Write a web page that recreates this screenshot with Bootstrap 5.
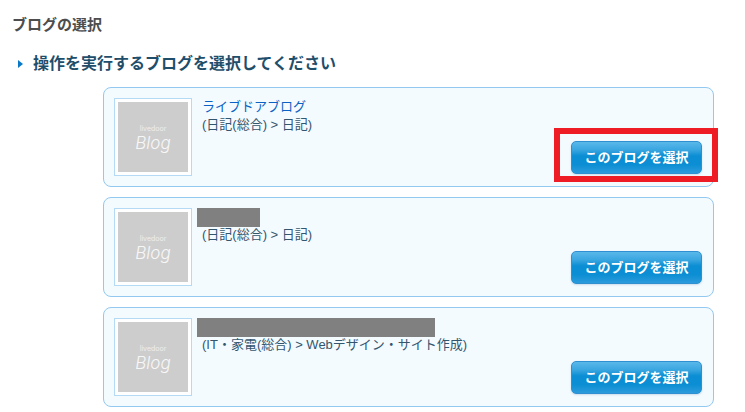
<!DOCTYPE html>
<html lang="ja">
<head>
<meta charset="utf-8">
<title>ブログの選択</title>
<link href="https://cdn.jsdelivr.net/npm/bootstrap@5.3.0/dist/css/bootstrap.min.css" rel="stylesheet">
<style>
html,body{height:412px;overflow:hidden;background:#fff}
body{font-family:"Liberation Sans","Noto Sans CJK JP",sans-serif;font-size:13px;line-height:17px;color:#33566e;position:relative}
.page-title{font-size:15px;line-height:20px;font-weight:700;color:#4d4d4d;margin:0;padding:15px 0 0 12px}
.sub-title{font-size:16px;line-height:22px;font-weight:700;color:#1f4e6b;margin:0;padding:18px 0 0 18px;display:flex;align-items:center}
.tri{width:0;height:0;border-left:5px solid #0a78c8;border-top:4px solid transparent;border-bottom:4px solid transparent;margin-right:10px}
.blog-list{margin:12px 0 0 103px;width:611px;display:flex;flex-direction:column;gap:10px}
.blog-item{height:100px;background:#f4fbff;border:1px solid #93c8f0;border-radius:8px;padding:10px;display:flex;position:relative}
.thumb{width:78px;height:78px;flex:none;background:#fff;border:1px solid #b5daf5;padding:3px}
.thumb-in{width:70px;height:70px;background:#cdcdcd;color:#fff;display:flex;flex-direction:column;align-items:center;justify-content:center;padding-top:3px}
.thumb-a{font-size:7px;line-height:9px;color:#eee;font-family:"Inter",sans-serif}
.thumb-b{font-size:17px;line-height:20px;font-style:italic;font-family:"Inter",sans-serif;font-weight:300;color:#f7f7f7}
.info{margin-left:5px;padding-top:0;flex:1;min-width:0}
.name{display:block;height:19px;line-height:17px;padding-left:5px;color:#0a62c4;text-decoration:none;font-size:13px}
.redact{display:block;height:19px;background:#808080}
.cat{padding-left:5px;display:block;line-height:17px;margin-top:-1px}
.pick{position:absolute;right:11px;bottom:12px;width:131px;height:33px;padding:0;border:1px solid #2f8fd0;border-radius:5px;font-size:13px;font-weight:700;line-height:31px;color:#fff;background:linear-gradient(#5ab8ea 0,#3aa6e0 25%,#0b8ed3 45%,#0b8ed3 72%,#2a9bdc 100%);font-family:"Liberation Sans","Noto Sans CJK JP",sans-serif;box-shadow:0 1px 2px rgba(80,130,170,.25)}
.pick:hover{color:#fff}
.hilite{position:absolute;left:554px;top:128px;width:164px;height:54px;border:6px solid #ee1c25;pointer-events:none}
</style>
</head>
<body>
<h1 class="page-title">ブログの選択</h1>
<h2 class="sub-title"><span class="tri"></span>操作を実行するブログを選択してください</h2>
<div class="blog-list">
  <div class="blog-item">
    <div class="thumb"><div class="thumb-in"><span class="thumb-a">livedoor</span><span class="thumb-b">Blog</span></div></div>
    <div class="info"><a class="name" href="#">ライブドアブログ</a><span class="cat">(日記(総合) &gt; 日記)</span></div>
    <button class="btn pick" type="button">このブログを選択</button>
  </div>
  <div class="blog-item">
    <div class="thumb"><div class="thumb-in"><span class="thumb-a">livedoor</span><span class="thumb-b">Blog</span></div></div>
    <div class="info"><span class="redact" style="width:63px"></span><span class="cat">(日記(総合) &gt; 日記)</span></div>
    <button class="btn pick" type="button">このブログを選択</button>
  </div>
  <div class="blog-item">
    <div class="thumb"><div class="thumb-in"><span class="thumb-a">livedoor</span><span class="thumb-b">Blog</span></div></div>
    <div class="info"><span class="redact" style="width:238px"></span><span class="cat">(IT・家電(総合) &gt; Webデザイン・サイト作成)</span></div>
    <button class="btn pick" type="button">このブログを選択</button>
  </div>
</div>
<div class="hilite"></div>
<script src="https://cdn.jsdelivr.net/npm/bootstrap@5.3.0/dist/js/bootstrap.bundle.min.js"></script>
</body>
</html>
